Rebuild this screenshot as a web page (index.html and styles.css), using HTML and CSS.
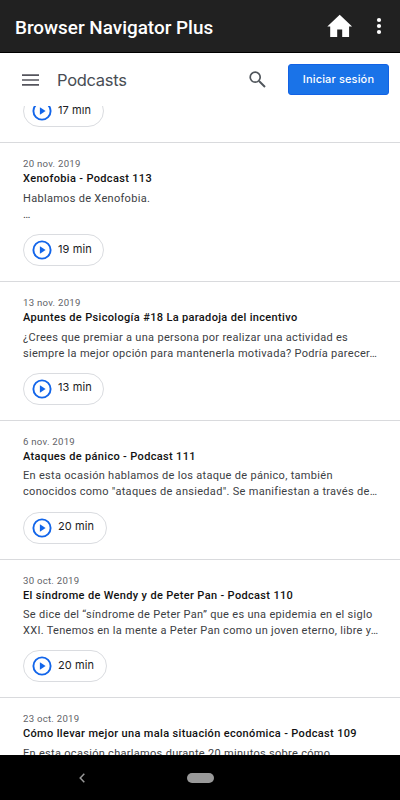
FILE: index.html
```html
<!DOCTYPE html>
<html lang="es">
<head>
    <meta charset="UTF-8">
    <meta name="viewport" content="width=device-width, initial-scale=1.0">
    <title>Browser Navigator Plus</title>
    <link rel="stylesheet" href="styles.css">
</head>
<body>
    <svg width="0" height="0" class="defs">
        <symbol id="play" viewBox="0 0 20 20">
            <circle cx="10" cy="10" r="8.6" fill="none" stroke="#1265ea" stroke-width="1.9"/>
            <path d="M7.9 6.2v7.6l5.7-3.8z" fill="#1265ea"/>
        </symbol>
    </svg>

    <div class="app-bar">
        <h1>Browser Navigator Plus</h1>
        <svg class="home" width="26" height="24" viewBox="0 0 26 24">
            <path d="M12.7 .8L.3 12.5h2.9V23h7v-7.5h5V23h6.9V12.5h3z" fill="#fff"/>
        </svg>
        <svg class="more" width="6" height="18" viewBox="0 0 6 18" fill="#fff">
            <circle cx="3" cy="3" r="2.1"/>
            <circle cx="3" cy="9" r="2.1"/>
            <circle cx="3" cy="15" r="2.1"/>
        </svg>
    </div>

    <header class="header">
        <svg class="menu" width="17" height="12" viewBox="0 0 17 12">
            <path d="M0 1.2h17M0 6h17M0 10.8h17" stroke="#55555d" stroke-width="1.7"/>
        </svg>
        <h2>Podcasts</h2>
        <svg class="search" width="17" height="17" viewBox="0 0 17 17" fill="none" stroke="#50555b">
            <circle cx="6.2" cy="6.2" r="5" stroke-width="1.7"/>
            <path d="M10 10l6 6" stroke-width="2"/>
        </svg>
        <button class="login">Iniciar sesión</button>
    </header>

    <main class="list">
        <article class="episode cut">
            <div class="play"><svg><use href="#play"/></svg><span>17 min</span></div>
        </article>
        <article class="episode">
            <div class="date">20 nov. 2019</div>
            <h3>Xenofobia - Podcast 113</h3>
            <p>Hablamos de Xenofobia.<br>…</p>
            <div class="play"><svg><use href="#play"/></svg><span>19 min</span></div>
        </article>
        <article class="episode">
            <div class="date">13 nov. 2019</div>
            <h3>Apuntes de Psicología #18 La paradoja del incentivo</h3>
            <p>¿Crees que premiar a una persona por realizar una actividad es<br>siempre la mejor opción para mantenerla motivada? Podría parecer…</p>
            <div class="play"><svg><use href="#play"/></svg><span>13 min</span></div>
        </article>
        <article class="episode">
            <div class="date">6 nov. 2019</div>
            <h3>Ataques de pánico - Podcast 111</h3>
            <p>En esta ocasión hablamos de los ataque de pánico, también<br>conocidos como "ataques de ansiedad". Se manifiestan a través de…</p>
            <div class="play"><svg><use href="#play"/></svg><span>20 min</span></div>
        </article>
        <article class="episode">
            <div class="date">30 oct. 2019</div>
            <h3>El síndrome de Wendy y de Peter Pan - Podcast 110</h3>
            <p>Se dice del “síndrome de Peter Pan” que es una epidemia en el siglo<br>XXI. Tenemos en la mente a Peter Pan como un joven eterno, libre y…</p>
            <div class="play"><svg><use href="#play"/></svg><span>20 min</span></div>
        </article>
        <article class="episode">
            <div class="date">23 oct. 2019</div>
            <h3>Cómo llevar mejor una mala situación económica - Podcast 109</h3>
            <p>En esta ocasión charlamos durante 20 minutos sobre cómo</p>
        </article>
    </main>

    <nav class="nav-bar">
        <svg width="6" height="10" viewBox="0 0 6 10">
            <path d="M5.3.7L1.2 5l4.1 4.3" fill="none" stroke="#999" stroke-width="1.5"/>
        </svg>
        <span class="pill"></span>
        <span class="blank"></span>
    </nav>
</body>
</html>
```
FILE: styles.css
```css
* {
    box-sizing: border-box;
}
body {
    margin: 0;
    width: 400px;
    height: 800px;
    display: flex;
    flex-direction: column;
    overflow: hidden;
    background: #fff;
    font-family: Roboto, sans-serif;
}
h1, h2, h3, p {
    margin: 0;
}
.defs {
    display: none;
}
.app-bar {
    flex: none;
    display: flex;
    align-items: center;
    height: 53px;
    padding: 0 18px 0 15px;
    background: #212121;
    border-bottom: 1px solid #000;
    color: #fff;
}
.app-bar h1 {
    flex: 1;
    padding-top: 2px;
    font-size: 18.9px;
    font-weight: 500;
    white-space: nowrap;
}
.home {
    margin-right: 23px;
}
.header {
    flex: none;
    display: flex;
    align-items: center;
    height: 53px;
    padding: 0 11px 0 22px;
}
.header h2 {
    flex: 1;
    margin-left: 18px;
    font-family: Inter, sans-serif;
    font-size: 16.5px;
    font-weight: 400;
    letter-spacing: -0.3px;
    color: #484d54;
}
.search {
    margin-right: 22px;
}
.login {
    width: 101px;
    height: 31px;
    padding: 0 0 2px;
    border: 1px solid #1262e5;
    border-radius: 3px;
    background: #1a73e8;
    color: #fff;
    font-family: Inter, sans-serif;
    font-size: 11px;
    font-weight: 500;
    letter-spacing: 0.15px;
}
.list {
    flex: 1;
    min-height: 0;
    overflow: hidden;
}
.episode {
    height: 138.75px;
    padding: 14px 22px 0 23px;
    border-top: 1px solid #d9dadd;
    white-space: nowrap;
}
.episode.cut {
    height: 36.4px;
    padding-top: 0;
    border-top: none;
}
.cut .play {
    margin-top: -11px;
}
.date {
    font-size: 9.6px;
    line-height: 14px;
    letter-spacing: 0.26px;
    color: #5f6368;
}
.episode h3 {
    font-size: 11px;
    font-weight: 500;
    line-height: 15px;
    letter-spacing: 0.34px;
    color: #111;
}
.episode p {
    height: 32px;
    margin: 4.5px 0 11.2px;
    font-size: 11px;
    line-height: 16px;
    letter-spacing: 0.3px;
    color: #3c4043;
}
.play {
    display: inline-flex;
    align-items: center;
    height: 32px;
    padding: 0 11.5px 0 8px;
    border: 1px solid #dadce0;
    border-radius: 16px;
    font-family: Inter, sans-serif;
    font-size: 11px;
    letter-spacing: 0.1px;
    color: #202124;
}
.play svg {
    width: 20px;
    height: 20px;
    margin-right: 6px;
}
.play span {
    padding-bottom: 3px;
}
.nav-bar {
    flex: none;
    display: flex;
    align-items: center;
    justify-content: space-between;
    height: 45px;
    padding: 0 79px;
    background: #000;
}
.pill {
    width: 27px;
    height: 10px;
    border-radius: 5px;
    background: #999;
}
.blank {
    width: 6px;
}
```
